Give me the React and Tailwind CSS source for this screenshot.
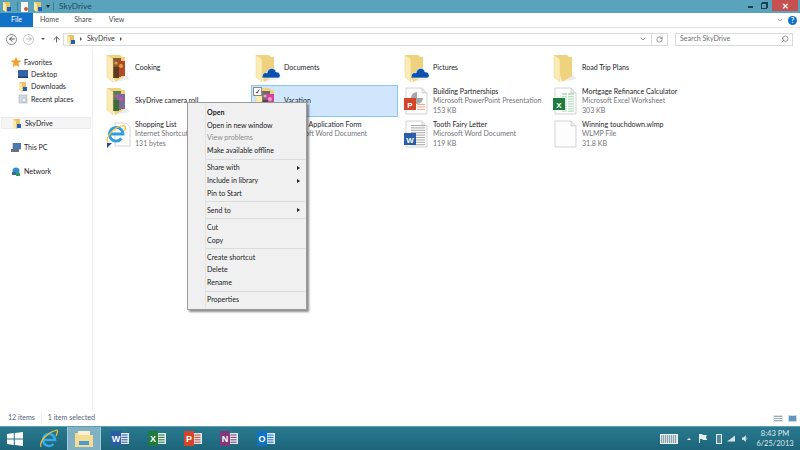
import React from "react";
import { ChevronDown, ArrowUp, ArrowLeft, ArrowRight, RotateCw, Search } from "lucide-react";

const Folder = ({ children }) => (
  <svg width="26" height="30" viewBox="0 0 26 30">
    <path d="M8 29 L24 26 L19 22 Z" fill="#ececec" />
    <path d="M1 2 L14 2 L16 4 L19 4 L19 23 L9 29 Z" fill="#efd27e" />
    {children}
    <path d="M1 2 L7 6 V29 L1 24 Z" fill="#fcecb4" stroke="#e8cf8a" strokeWidth="0.5" />
  </svg>
);

const Photos = ({ a, b, c, d }) => (
  <g>
    <rect x="7" y="5" width="8" height="19" fill={a} />
    <rect x="11" y="8" width="8" height="15" fill={b} />
    <rect x="7" y="14" width="6" height="11" fill={c} />
    <circle cx="15" cy="13" r="2" fill={d} />
    <circle cx="10" cy="10" r="1.6" fill={d} />
  </g>
);

const Cloud = () => (
  <path d="M7 25 C7 20 10 19 12 20 C13 14 20 14 21 19 C25 18 27 25 23 25 Z" fill="#0a52ad" stroke="#fff" strokeWidth="0.6" />
);

const Page = ({ children }) => (
  <svg width="26" height="30" viewBox="0 0 26 30">
    <path d="M2 2 H18 L23 7 V28 H2 Z" fill="#fdfdfd" stroke="#c8c8c8" strokeWidth="0.8" />
    <path d="M18 2 V7 H23" fill="#e8e8e8" stroke="#c8c8c8" strokeWidth="0.6" />
    {children}
  </svg>
);

const Badge = ({ bg, letter, x = 0, y = 13, s = 11 }) => (
  <g>
    <rect x={x} y={y} width={s} height={s} fill={bg} />
    <text x={x + s / 2} y={y + s - 2.5} fontSize="8" fontWeight="700" fill="#fff" textAnchor="middle" fontFamily="Liberation Sans, sans-serif">
      {letter}
    </text>
  </g>
);

const Lines = ({ x, y, n, w, color = "#a9a9a9" }) => (
  <g>
    {Array.from({ length: n }).map((_, i) => (
      <rect key={i} x={x} y={y + i * 2.4} width={w} height="1" fill={color} />
    ))}
  </g>
);

const icons = {
  cooking: (
    <Folder>
      <Photos a="#8a5a2c" b="#b04a2a" c="#5b3a1f" d="#d9a441" />
    </Folder>
  ),
  roll: (
    <Folder>
      <Photos a="#5c7d53" b="#7d6a9c" c="#3f6b3a" d="#c552a8" />
    </Folder>
  ),
  vacation: (
    <Folder>
      <Photos a="#6d6a68" b="#d2439b" c="#4a4a4a" d="#e9a0c8" />
    </Folder>
  ),
  cloud: (
    <Folder>
      <Cloud />
    </Folder>
  ),
  plain: <Folder />,
  ie: (
    <svg width="26" height="30" viewBox="0 0 26 30">
      <path d="M9 4 H20 L24 8 V27 H9 Z" fill="#fdfdfd" stroke="#cccccc" strokeWidth="0.8" />
      <path d="M4 15 H17 A6.8 6.8 0 1 0 15.5 19.5" fill="none" stroke="#2f9fe0" strokeWidth="2.8" />
      <path d="M2 24 C-1 18 9 6 19 7 C20 9 19 11 18 12" fill="none" stroke="#f2c230" strokeWidth="1.3" />
      <path d="M1 29 V24 H6 Z" fill="#1f4fa0" />
    </svg>
  ),
  word: (
    <Page>
      <Lines x={7} y={6} n={9} w={14} />
      <Badge bg="#2a5caa" letter="W" y={14} s={12} />
    </Page>
  ),
  ppt: (
    <Page>
      <path d="M13 6 A6 6 0 1 0 19 12 H13 Z" fill="#a8a8a8" />
      <Lines x={13} y={18} n={3} w={8} color="#f0a98d" />
      <Badge bg="#d2452a" letter="P" y={12} s={12} />
    </Page>
  ),
  excel: (
    <Page>
      <rect x="9" y="7" width="12" height="19" fill="#bfe0c8" />
      <Lines x={9} y={9} n={8} w={12} color="#fff" />
      <rect x="14" y="7" width="1" height="19" fill="#fff" />
      <Badge bg="#1f7a3e" letter="X" y={12} s={12} />
    </Page>
  ),
  blank: <Page />,
};

const tiles = [
  { icon: "cooking", name: "Cooking" },
  { icon: "cloud", name: "Documents" },
  { icon: "cloud", name: "Pictures" },
  { icon: "plain", name: "Road Trip Plans" },
  { icon: "roll", name: "SkyDrive camera roll" },
  { icon: "vacation", name: "Vacation", selected: true },
  { icon: "ppt", name: "Building Partnerships", sub: "Microsoft PowerPoint Presentation", size: "153 KB" },
  { icon: "excel", name: "Mortgage Refinance Calculator", sub: "Microsoft Excel Worksheet", size: "303 KB" },
  { icon: "ie", name: "Shopping List", sub: "Internet Shortcut", size: "131 bytes" },
  { icon: "word", name: "College Application Form", sub: "Microsoft Word Document", size: "24 KB" },
  { icon: "word", name: "Tooth Fairy Letter", sub: "Microsoft Word Document", size: "119 KB" },
  { icon: "blank", name: "Winning touchdown.wlmp", sub: "WLMP File", size: "31.8 KB" },
];

const Tile = ({ icon, name, sub, size, selected }) => (
  <div className={"relative flex items-center h-[32px] border " + (selected ? "bg-[#cfe6fc] border-[#8cc4f2]" : "border-transparent")}>
    <div className="w-[32px] pl-[3px] flex-none flex items-center">{icons[icon]}</div>
    <div className="leading-[9.6px] whitespace-nowrap">
      <div className="text-[#1c1c28]">{name}</div>
      {sub && <div className="text-[#73737b]">{sub}</div>}
      {size && <div className="text-[#73737b]">{size}</div>}
    </div>
    {selected && (
      <div className="absolute left-[1px] top-[1px] w-[9px] h-[9px] bg-white border border-[#8a8a8a] flex items-center justify-center text-[7px] leading-none text-black">
        ✓
      </div>
    )}
  </div>
);

const SmallFolder = () => (
  <svg width="10" height="11" viewBox="0 0 10 11" className="flex-none">
    <path d="M1 1 H8 V9 L4 11 Z" fill="#e8c368" />
    <path d="M1 1 L4 3 V11 L1 9 Z" fill="#fbe9a8" />
    <rect x="5" y="6" width="4" height="4" fill="#1f5fbf" />
  </svg>
);

const NavRow = ({ icon, label, indent, className = "" }) => (
  <div className={"flex items-center h-[12.3px] gap-[3px] text-[#1c1c28] " + indent + " " + className}>
    <div className="w-[11px] flex-none flex items-center justify-center">{icon}</div>
    <span className="whitespace-nowrap">{label}</span>
  </div>
);

const Sidebar = () => (
  <div className="w-[93px] flex-none border-r border-[#efefef] pt-[6px]">
    <NavRow
      indent="pl-[10px]"
      label="Favorites"
      icon={
        <svg width="10" height="10" viewBox="0 0 24 24">
          <path d="M12 1 L15.5 8.5 L23 9.5 L17.5 15 L19 23 L12 19 L5 23 L6.5 15 L1 9.5 L8.5 8.5 Z" fill="#f5a623" stroke="#d9822b" strokeWidth="1" />
        </svg>
      }
    />
    <NavRow
      indent="pl-[17px]"
      label="Desktop"
      icon={
        <svg width="10" height="8" viewBox="0 0 10 8">
          <rect width="10" height="8" fill="#3464a8" />
          <rect x="0" y="6.6" width="10" height="1.4" fill="#1d3d70" />
        </svg>
      }
    />
    <NavRow indent="pl-[17px]" label="Downloads" icon={<SmallFolder />} />
    <NavRow
      indent="pl-[17px]"
      label="Recent places"
      icon={
        <svg width="10" height="10" viewBox="0 0 10 10">
          <rect x="1" y="1" width="8" height="8" fill="#d3dbe3" stroke="#a5adb5" strokeWidth="0.6" />
          <circle cx="6" cy="6" r="2.2" fill="#eef2f6" stroke="#8ea0b3" strokeWidth="0.6" />
        </svg>
      }
    />
    <div className="ml-[1px] mr-[1px] mt-[12px] h-[12px] bg-[#f5f5f5] border border-[#ececec] flex items-center">
      <NavRow indent="pl-[9px]" label="SkyDrive" icon={<SmallFolder />} />
    </div>
    <NavRow
      indent="pl-[10px]"
      className="mt-[12.5px]"
      label="This PC"
      icon={
        <svg width="10" height="9" viewBox="0 0 10 9">
          <rect x="2" y="0" width="8" height="6" fill="#4a7ab8" stroke="#5a6a7a" strokeWidth="0.6" />
          <rect x="0" y="6" width="8" height="3" fill="#68707a" />
        </svg>
      }
    />
    <NavRow
      indent="pl-[10px]"
      className="mt-[11.5px]"
      label="Network"
      icon={
        <svg width="10" height="10" viewBox="0 0 10 10">
          <circle cx="5" cy="4" r="3.5" fill="#2f8fce" />
          <rect x="1" y="5" width="4" height="3" fill="#3d6a8a" />
          <rect x="5" y="6" width="4" height="3" fill="#2f9a55" />
        </svg>
      }
    />
  </div>
);

const menu = [
  [{ label: "Open", bold: true }, { label: "Open in new window" }, { label: "View problems", off: true }, { label: "Make available offline" }],
  [{ label: "Share with", arrow: true }, { label: "Include in library", arrow: true }, { label: "Pin to Start" }],
  [{ label: "Send to", arrow: true }],
  [{ label: "Cut" }, { label: "Copy" }],
  [{ label: "Create shortcut" }, { label: "Delete" }, { label: "Rename" }],
  [{ label: "Properties" }],
];

const ContextMenu = () => (
  <div className="absolute left-[187px] top-[102px] w-[120px] bg-[#f0f0f0] border border-[#9a9a9a] shadow-[2px_2px_2px_rgba(0,0,0,0.45)] pt-[3px] pb-[2.5px] pl-[1px]">
    <div className="absolute left-[17px] top-0 bottom-0 w-px bg-[#e2e3e3]" />
    {menu.map((group, i) => (
      <div key={i}>
        {i > 0 && (
          <div className="h-[4.2px] flex items-center pl-[17px] pr-[1px]">
            <div className="h-px w-full bg-[#dcdcdc]" />
          </div>
        )}
        {group.map((item) => (
          <div
            key={item.label}
            className={
              "h-[12.8px] flex items-center justify-between pl-[18px] pr-[6px] " +
              (item.off ? "text-[#8c8c8c]" : "text-[#1a1a1a]") +
              (item.bold ? " font-bold" : "")
            }
          >
            <span>{item.label}</span>
            {item.arrow && <div className="w-0 h-0 border-y-[2.5px] border-y-transparent border-l-[3px] border-l-[#222]" />}
          </div>
        ))}
      </div>
    ))}
  </div>
);

const TitleBar = () => (
  <div className="h-[13px] bg-[#5aa3bd] flex items-center relative">
    <div className="flex items-center pl-[2px]">
      <SmallFolder />
      <div className="ml-[5px] w-px h-[9px] bg-[#3f7f96]" />
      <svg width="9" height="10" viewBox="0 0 9 10" className="ml-[2px]">
        <rect x="1" y="0" width="7" height="10" fill="#fff" />
        <circle cx="6" cy="7" r="2" fill="#d9592a" />
      </svg>
      <div className="ml-[4px]"><SmallFolder /></div>
      <div className="w-0 h-0 ml-[3px] border-x-[2px] border-x-transparent border-t-[3px] border-t-[#222]" />
      <div className="ml-[3px] w-px h-[9px] bg-[#3f7f96]" />
    </div>
    <span className="ml-[5px] text-[8.3px] leading-none text-[#244a5a]">SkyDrive</span>
    <div className="ml-auto mr-[2px] flex items-start self-start">
      <div className="w-[14px] h-[11px] flex items-center justify-center">
        <div className="w-[5px] h-[2px] mt-[3px] bg-[#1d3f4d]" />
      </div>
      <div className="w-[14px] h-[11px] mr-[1px] flex items-center justify-center">
        <div className="w-[6px] h-[6px] border border-[#1d3f4d] shadow-[1px_-1px_0_#1d3f4d]" />
      </div>
      <div className="w-[26px] h-[11px] bg-[#c75050] flex items-center justify-center text-white text-[8px] font-bold leading-none">
        ✕
      </div>
    </div>
  </div>
);

const Ribbon = () => (
  <div className="h-[15px] flex items-center bg-white border-b border-[#e3e3e3] text-[#4a4a4a]">
    <div className="w-[33px] h-full bg-[#1272c8] text-white flex items-center justify-center">File</div>
    <div className="w-[33px] text-center">Home</div>
    <div className="w-[34px] text-center">Share</div>
    <div className="w-[33px] text-center">View</div>
    <div className="ml-auto mr-[3px] flex items-center gap-[4px]">
      <ChevronDown size={8} color="#777" />
      <div className="w-[9px] h-[9px] rounded-full bg-[#1272c8] text-white text-[7px] font-bold flex items-center justify-center">?</div>
    </div>
  </div>
);

const AddressBar = () => (
  <div className="h-[22px] flex items-center bg-white pl-[6px]">
    <div className="w-[11px] h-[11px] rounded-full border border-[#8a8a8a] flex items-center justify-center">
      <ArrowLeft size={8} color="#555" strokeWidth={3} />
    </div>
    <div className="ml-[6px] w-[11px] h-[11px] rounded-full border border-[#c8c8c8] flex items-center justify-center">
      <ArrowRight size={8} color="#bbb" strokeWidth={3} />
    </div>
    <div className="ml-[7px] w-0 h-0 border-x-[2px] border-x-transparent border-t-[2.5px] border-t-[#555]" />
    <ArrowUp size={9} color="#555" strokeWidth={2.5} className="ml-[7px]" />
    <div className="ml-[2px] w-[605px] h-[13px] border border-[#dadada] flex items-center">
      <div className="ml-[2px]"><SmallFolder /></div>
      <div className="ml-[4px] w-0 h-0 border-y-[2px] border-y-transparent border-l-[2.5px] border-l-[#555]" />
      <span className="ml-[5px] text-[#333]">SkyDrive</span>
      <div className="ml-[5px] w-0 h-0 border-y-[2px] border-y-transparent border-l-[2.5px] border-l-[#555]" />
      <div className="ml-auto w-[16px] h-full flex items-center justify-center">
        <ChevronDown size={8} color="#555" />
      </div>
      <div className="w-[16px] h-full border-l border-[#dadada] flex items-center justify-center">
        <RotateCw size={7} color="#555" />
      </div>
    </div>
    <div className="ml-[7px] w-[118px] h-[13px] border border-[#dadada] flex items-center justify-between pl-[4px] pr-[3px] text-[#6d6d6d]">
      <span>Search SkyDrive</span>
      <Search size={8} color="#666" className="-scale-x-100" />
    </div>
  </div>
);

const StatusBar = () => (
  <div className="h-[16px] bg-white flex items-center text-[#55607a] pl-[8px] pr-[3px]">
    <span>12 items</span>
    <div className="w-px h-[10px] bg-[#eeeeee] mx-[6px]" />
    <span>1 item selected</span>
    <div className="ml-auto flex items-center gap-[5px]">
      <div className="w-[10px] h-[7px] bg-[repeating-linear-gradient(#9aa9bc_0_1px,#fff_1px_2px)] border border-[#dfe4ea]" />
      <div className="w-[9px] h-[7px] bg-[#5f97c0] border border-[#d0d8e0]" />
    </div>
  </div>
);

const TaskIcon = ({ bg, letter, line = "#dfe8ec" }) => (
  <div className="w-[36.4px] flex-none flex items-center justify-center">
    <svg width="18" height="15" viewBox="0 0 18 15">
      <rect x="8" y="2" width="10" height="11" fill={line} />
      <Lines x={10.5} y={3.5} n={4} w={6} color={bg} />
      <rect x="0" y="0" width="10" height="15" fill={bg} />
      <text x="5" y="11" fontSize="9" fontWeight="700" fill="#fff" textAnchor="middle" fontFamily="Liberation Sans, sans-serif">
        {letter}
      </text>
    </svg>
  </div>
);

const Taskbar = () => (
  <div className="h-[24px] flex items-stretch bg-gradient-to-b from-[#2a7a90] to-[#1c6479] border-t border-[#5f9fb4]">
    <div className="w-[30px] flex-none flex items-center justify-center">
      <svg width="16" height="14" viewBox="0 0 16 14">
        <path d="M0 2 L6.8 1.1 V6.5 H0 Z M7.8 1 L16 0 V6.5 H7.8 Z M0 7.5 H6.8 V12.9 L0 12 Z M7.8 7.5 H16 V14 L7.8 13 Z" fill="#fff" />
      </svg>
    </div>
    <div className="w-[37px] flex-none flex items-center justify-center">
      <svg width="20" height="20" viewBox="0 0 20 20">
        <path d="M4 11 H16 A6 6 0 1 0 14.5 15" fill="none" stroke="#38a8e8" strokeWidth="2.6" />
        <path d="M2 18 C0 12 9 3 18 1 C19 3 18 5 17 7" fill="none" stroke="#f2c230" strokeWidth="1.2" />
      </svg>
    </div>
    <div className="w-[34px] flex-none bg-[#7fb1c2] border-x border-[#a9cbd6] flex items-center justify-center">
      <svg width="20" height="16" viewBox="0 0 20 16">
        <path d="M1 2 H8 L10 4 H19 V16 H1 Z" fill="#f4dc92" />
        <rect x="4" y="0" width="12" height="4" fill="#f7f0d2" />
        <rect x="5" y="10" width="10" height="4" fill="#4a9ad4" />
      </svg>
    </div>
    <div className="ml-[1px] flex">
      <TaskIcon bg="#2a5caa" letter="W" />
      <TaskIcon bg="#1f7a3e" letter="X" />
      <TaskIcon bg="#d2452a" letter="P" />
      <TaskIcon bg="#80397b" letter="N" />
      <TaskIcon bg="#0f72c6" letter="O" />
    </div>
    <div className="ml-auto flex items-center">
      <div className="w-[18px] h-[10px] border border-[#eef2f3] bg-[repeating-linear-gradient(90deg,#8ba3ac_0_1px,#d4dde0_1px_2px)]" />
      <div className="ml-[9px] w-0 h-0 border-x-[2px] border-x-transparent border-b-[2.5px] border-b-white" />
      <svg width="10" height="9" viewBox="0 0 10 9" className="ml-[7px]">
        <path d="M1 0 V9 H2 V5 H4 L5 6 H9 L8 3 L9 1 H5 L4 0 Z" fill="#e9eff1" />
      </svg>
      <div className="ml-[8px] w-[6px] h-[10px] border border-[#dfe8eb] bg-[#4f8a9c]" />
      <svg width="8" height="7" viewBox="0 0 9 7" className="ml-[5px]">
        <path d="M0 7 L9 0 V7 Z" fill="#d7e2e6" />
      </svg>
      <svg width="6" height="9" viewBox="0 0 8 9" className="ml-[7px]">
        <path d="M0 3 H2 L5 0 V9 L2 6 H0 Z" fill="#e1e9ec" />
        <path d="M6 3 Q7.5 4.5 6 6" stroke="#c5d4d9" fill="none" />
      </svg>
      <div className="w-[50px] ml-[2px] text-center text-[#dfeaee] leading-[10px] text-[7.5px]">
        <div>8:43 PM</div>
        <div>6/25/2013</div>
      </div>
    </div>
  </div>
);

const App = () => {
  return (
    <div className="relative w-[800px] h-[450px] overflow-hidden flex flex-col bg-white text-[7.05px] leading-none font-['Lato',sans-serif]">
      <TitleBar />
      <Ribbon />
      <AddressBar />
      <div className="flex-1 flex min-h-0">
        <Sidebar />
        <div className="pl-[9px] pt-[2px] grid grid-cols-[repeat(4,147px)] gap-x-[2px] gap-y-[1px] content-start">
          {tiles.map((t) => (
            <Tile key={t.name} {...t} />
          ))}
        </div>
      </div>
      <StatusBar />
      <Taskbar />
      <ContextMenu />
    </div>
  );
};

export default App;
